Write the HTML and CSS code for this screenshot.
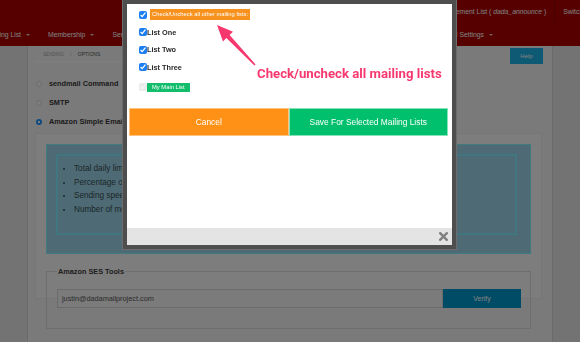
FILE: index.html
```html
<!DOCTYPE html>
<html lang="en">
<head>
    <meta charset="UTF-8">
    <meta name="viewport" content="width=device-width, initial-scale=1.0">
    <title>Dada Mail - Sending Options</title>
    <link rel="stylesheet" href="styles.css">
</head>
<body>
    <div class="header">
        <div class="top-row">
            <div class="top-item list-name">Announcement List ( <em>dada_announce</em> )</div>
            <div class="top-item">Switch List</div>
        </div>
        <ul class="nav">
            <li>Mailing List<span class="caret"></span></li>
            <li>Membership<span class="caret"></span></li>
            <li>Sending<span class="caret"></span></li>
            <li class="last">Control Panel Settings<span class="caret"></span></li>
        </ul>
    </div>

    <div class="page">
        <div class="panel">
            <div class="panel-head">
                <div class="crumbs">Sending <span class="sep">/</span> <span class="current">Options</span></div>
                <a href="#" class="help">Help</a>
            </div>

            <ul class="methods">
                <li><span class="radio"></span>sendmail Command</li>
                <li><span class="radio"></span>SMTP</li>
                <li><span class="radio on"></span>Amazon Simple Email Service</li>
            </ul>

            <div class="ses">
                <div class="notice">
                    <div class="notice-inner">
                        <ul>
                            <li>Total daily limit: 50,000</li>
                            <li>Percentage of limit used: 0%</li>
                            <li>Sending speed: 14 messages/second</li>
                            <li>Number of messages sent in the last 24 hours: 0</li>
                        </ul>
                    </div>
                </div>

                <fieldset class="tools">
                    <legend>Amazon SES Tools</legend>
                    <div class="verify-row">
                        <input type="text" class="email" value="justin@dadamailproject.com">
                        <button class="verify">Verify</button>
                    </div>
                </fieldset>
            </div>
        </div>
    </div>

    <div class="backdrop"></div>

    <!-- mass subscription modal -->
    <div class="modal">
        <div class="modal-body">
            <ul class="lists">
                <li class="toggle-all">
                    <input type="checkbox" checked>
                    <span class="tag orange">Check/Uncheck all other mailing lists:</span>
                </li>
                <li><input type="checkbox" checked>List One</li>
                <li><input type="checkbox" checked>List Two</li>
                <li><input type="checkbox" checked>List Three</li>
                <li class="main-list">
                    <input type="checkbox" checked disabled>
                    <span class="tag green">My Main List</span>
                </li>
            </ul>
            <div class="actions">
                <button class="btn cancel">Cancel</button>
                <button class="btn save">Save For Selected Mailing Lists</button>
            </div>
        </div>
        <div class="modal-foot">
            <svg class="close" width="9" height="9" viewBox="0 0 9 9">
                <path d="M1.2 1.2 L7.8 7.8 M7.8 1.2 L1.2 7.8" stroke="#808080" stroke-width="2.4" stroke-linecap="square"/>
            </svg>
        </div>
    </div>

    <!-- annotation -->
    <div class="callout">
        <svg width="580" height="342" viewBox="0 0 580 342">
            <polygon fill="#f7386e" points="217,25 233,31.8 229.6,35.1 255.6,64.4 254.4,65.6 226.4,38.1 223,41.4"/>
        </svg>
        <div class="callout-text">Check/uncheck all mailing lists</div>
    </div>
</body>
</html>
```

FILE: styles.css
```css
* {
    box-sizing: border-box;
}

body {
    margin: 0;
    width: 580px;
    height: 342px;
    overflow: hidden;
    background-color: #e6e6e6;
    font-family: "Liberation Sans", Arial, sans-serif;
    color: #3a3a3a;
}

/* Header */
.header {
    background-color: #ac0000;
    height: 46px;
    overflow: hidden;
    color: #fff;
    font-size: 6.8px;
    white-space: nowrap;
}

.top-row {
    display: flex;
    height: 23px;
    align-items: center;
    padding-left: 421px;
}

.top-item {
    flex: none;
    padding: 0 8px;
    line-height: 23px;
}

.list-name {
    border-right: 1px solid #900000;
}

.nav {
    display: flex;
    list-style-type: none;
    margin: 0 0 0 -22px;
    padding: 0 78px 0 0;
    height: 23px;
}

.nav li {
    flex: none;
    display: flex;
    align-items: center;
    padding: 0 9px;
}

.nav li.last {
    margin-left: auto;
}

.caret {
    width: 0;
    height: 0;
    margin-left: 5px;
    border-left: 2px solid transparent;
    border-right: 2px solid transparent;
    border-top: 2px solid #e6c4c4;
}

/* Page */
.panel {
    margin-left: 27px;
    width: 526px;
    height: 296px;
    background-color: #f4f4f4;
    border-left: 1px solid #d6d6d6;
    border-right: 1px solid #d6d6d6;
    padding: 0 10px 0 7px;
}

.panel-head {
    display: flex;
    justify-content: space-between;
    align-items: flex-start;
}

.crumbs {
    width: 200px;
    height: 16px;
    line-height: 16px;
    padding-left: 8px;
    border-bottom: 1px solid #fff;
    border-right: 1px solid #eaeaea;
    font-size: 4.6px;
    text-transform: uppercase;
    color: #aaa;
}

.crumbs .sep {
    margin: 0 5px;
}

.crumbs .current {
    color: #545454;
    font-size: 5px;
}

.help {
    margin-top: 2px;
    margin-right: -1px;
    width: 33px;
    height: 16px;
    line-height: 16px;
    background-color: #1cb4e8;
    color: #fff;
    font-size: 6px;
    text-align: center;
    text-decoration: none;
}

.methods {
    list-style-type: none;
    margin: 10px 0 0;
    padding: 0;
}

.methods li {
    display: flex;
    align-items: center;
    height: 19px;
    font-size: 7.3px;
    font-weight: bold;
    color: #383838;
}

.radio {
    width: 6px;
    height: 6px;
    margin: 0 7px 0 1px;
    border-radius: 50%;
    border: 1px solid #d8d8d8;
    background-color: #fff;
}

.radio.on {
    border: none;
    background: radial-gradient(circle, #f8f8f8 0 1.1px, #1894ff 1.6px);
}

.ses {
    margin-top: 2px;
    height: 166px;
    border: 1px solid #ececec;
    background-color: #fafafa;
    padding: 10px 10px 0;
}

.notice {
    background-color: #9cd6ea;
    border: 1px solid #84f6ff;
    padding: 9px 13px 18px 9px;
}

.notice-inner {
    border: 2px solid #7eecff;
    padding: 6px 0 16px;
}

.notice ul {
    margin: 0;
    padding-left: 16px;
    font-size: 8.2px;
    line-height: 13.7px;
    color: #384c52;
}

.tools {
    margin: 13px 0 0;
    padding: 13px 9px 20px 10px;
    border: 1px solid #dcdcdc;
    min-width: 0;
}

.tools legend {
    padding: 0 1px;
    font-size: 7.3px;
    line-height: 9px;
    font-weight: bold;
    color: #3c3c3c;
}

.verify-row {
    display: flex;
}

.email {
    width: 386px;
    height: 19px;
    margin: 0;
    padding: 0 4px;
    background-color: #f6f6f6;
    border: 1px solid #d6d6d6;
    font-family: inherit;
    font-size: 7.3px;
    color: #565656;
}

.verify {
    flex: none;
    width: 78px;
    height: 19px;
    margin: 0;
    border: 0;
    background-color: #0098cc;
    color: #fff;
    font-family: inherit;
    font-size: 7px;
}

/* Dimmed page behind the modal */
.backdrop {
    position: fixed;
    left: 0;
    top: 0;
    width: 580px;
    height: 342px;
    background: rgba(0, 0, 0, 0.5);
}

/* Modal */
.modal {
    position: fixed;
    left: 123px;
    top: 0;
    width: 333px;
    height: 249px;
    background: white;
    border: 4px solid #4e4e4e;
    box-shadow: 0 0 0 1px #6c6c6c;
    display: flex;
    flex-direction: column;
}

.modal-body {
    flex: 1;
    padding: 2px 4px 0 2px;
}

.lists {
    list-style-type: none;
    margin: 0;
    padding: 0 0 0 10px;
}

.lists li {
    display: flex;
    align-items: center;
    height: 17.5px;
    font-size: 7.3px;
    font-weight: bold;
    color: #2a2a2a;
}

.lists input {
    width: 8px;
    height: 8px;
    margin: 0;
    accent-color: #1c7ef3;
}

.lists li.main-list {
    margin-top: 2.5px;
}

.main-list input {
    opacity: 0.45;
}

.tag {
    display: inline-block;
    height: 11px;
    line-height: 11px;
    font-size: 5.8px;
    font-weight: normal;
    color: white;
}

.tag.orange {
    margin-left: 3px;
    padding: 0 2px;
    background-color: #f8921e;
}

.tag.green {
    height: 9px;
    line-height: 9px;
    padding: 0 5px;
    background-color: #12be6c;
}

.actions {
    display: flex;
    margin-top: 12px;
}

.btn {
    flex: 1;
    height: 28px;
    margin: 0;
    border: 1px solid;
    color: white;
    font-family: inherit;
    font-size: 8.4px;
}

.btn.cancel {
    background-color: #ff9116;
    border-color: #ffc27e;
}

.btn.save {
    background-color: #00c06d;
    border-color: #86e2b8;
}

.modal-foot {
    height: 17px;
    background-color: #e4e4e4;
    display: flex;
    justify-content: flex-end;
    align-items: center;
    padding-right: 4px;
}

/* Annotation drawn over the screenshot */
.callout {
    position: fixed;
    left: 0;
    top: 0;
    width: 580px;
    height: 342px;
    pointer-events: none;
}

.callout svg {
    display: block;
}

.callout-text {
    position: absolute;
    left: 257px;
    top: 66px;
    font-family: Roboto, "Liberation Sans", sans-serif;
    font-weight: bold;
    font-size: 13.2px;
    line-height: 16px;
    color: #f7386e;
    white-space: nowrap;
}
```
